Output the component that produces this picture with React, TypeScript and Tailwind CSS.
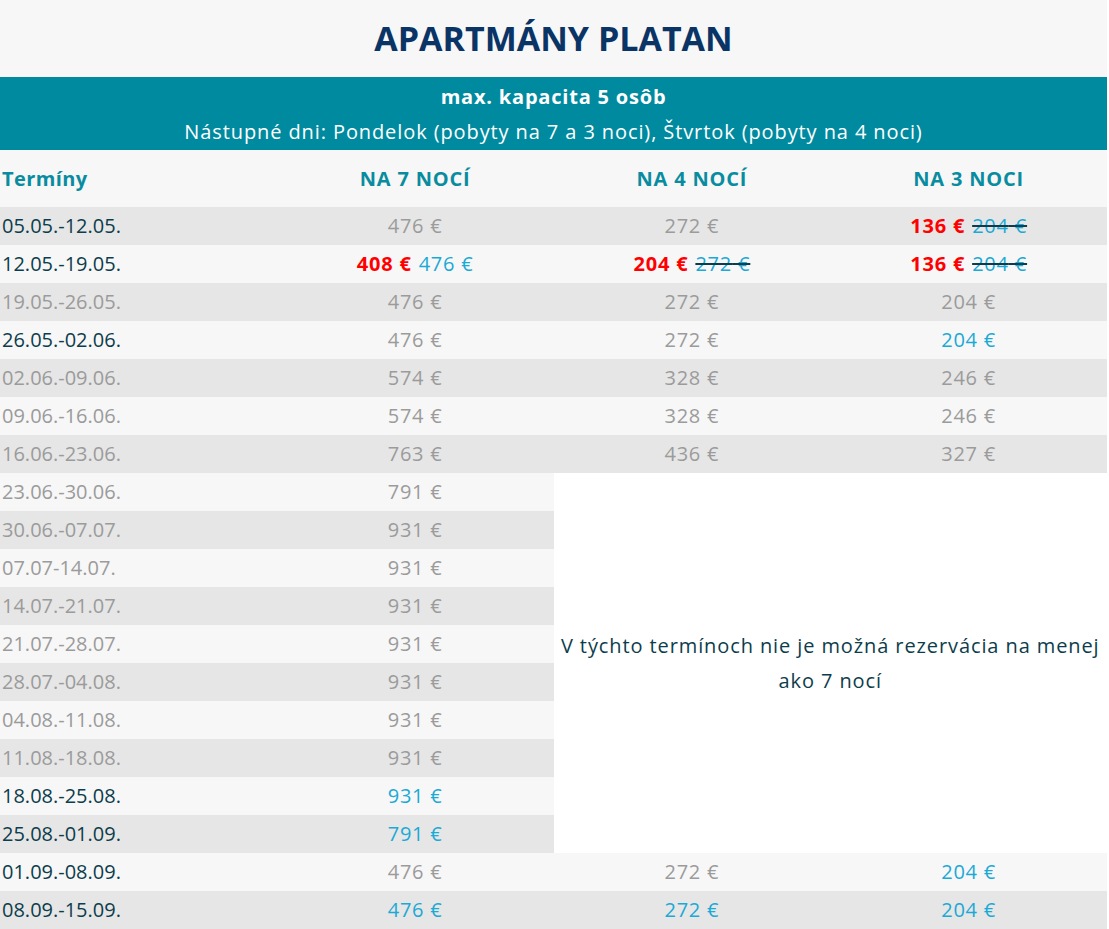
type Price = { v: string; tone: 'gray' | 'cyan' | 'red'; strike?: boolean };
type Cell = Price[];

interface Row {
  date: string;
  active: boolean;
  n7: Cell;
  n4?: Cell;
  n3?: Cell;
}

const g = (v: string): Cell => [{ v, tone: 'gray' }];
const c = (v: string): Cell => [{ v, tone: 'cyan' }];
const sale = (now: string, was: string, strike = true): Cell => [
  { v: now, tone: 'red' },
  { v: was, tone: 'cyan', strike },
];

const rows: Row[] = [
  { date: '05.05.-12.05.', active: true, n7: g('476'), n4: g('272'), n3: sale('136', '204') },
  { date: '12.05.-19.05.', active: true, n7: sale('408', '476', false), n4: sale('204', '272'), n3: sale('136', '204') },
  { date: '19.05.-26.05.', active: false, n7: g('476'), n4: g('272'), n3: g('204') },
  { date: '26.05.-02.06.', active: true, n7: g('476'), n4: g('272'), n3: c('204') },
  { date: '02.06.-09.06.', active: false, n7: g('574'), n4: g('328'), n3: g('246') },
  { date: '09.06.-16.06.', active: false, n7: g('574'), n4: g('328'), n3: g('246') },
  { date: '16.06.-23.06.', active: false, n7: g('763'), n4: g('436'), n3: g('327') },
  { date: '23.06.-30.06.', active: false, n7: g('791') },
  { date: '30.06.-07.07.', active: false, n7: g('931') },
  { date: '07.07-14.07.', active: false, n7: g('931') },
  { date: '14.07.-21.07.', active: false, n7: g('931') },
  { date: '21.07.-28.07.', active: false, n7: g('931') },
  { date: '28.07.-04.08.', active: false, n7: g('931') },
  { date: '04.08.-11.08.', active: false, n7: g('931') },
  { date: '11.08.-18.08.', active: false, n7: g('931') },
  { date: '18.08.-25.08.', active: true, n7: c('931') },
  { date: '25.08.-01.09.', active: true, n7: c('791') },
  { date: '01.09.-08.09.', active: true, n7: g('476'), n4: g('272'), n3: c('204') },
  { date: '08.09.-15.09.', active: true, n7: c('476'), n4: c('272'), n3: c('204') },
];

function PriceCell({ cell }: { cell: Cell }) {
  return (
    <>
      {cell.map((p, i) => (
        <span
          key={i}
          className={
            p.tone === 'red'
              ? 'font-bold text-[#ff0000] mr-[7px]'
              : p.tone === 'cyan'
                ? `text-[#1ba9d5] ${p.strike ? 'line-through decoration-[#0d3d4c]' : ''}`
                : 'text-[#9b9b9b]'
          }
        >
          {p.v} €
        </span>
      ))}
    </>
  );
}

export default function App() {
  return (
    <div className="min-h-screen bg-white" style={{ fontFamily: '"Open Sans", "Noto Sans", sans-serif' }}>
      <div className="w-[1107px] bg-[#f7f7f7]">
        <h1 className="h-[77px] flex items-center justify-center text-[34px] font-bold text-[#0b3466]">
          APARTMÁNY PLATAN
        </h1>
        <div className="h-[73px] bg-[#008a9f] text-white flex flex-col items-center justify-center text-[20px] leading-[35px] tracking-[0.9px]">
          <p className="font-bold tracking-[0.8px]">max. kapacita 5 osôb</p>
          <p>Nástupné dni: Pondelok (pobyty na 7 a 3 noci), Štvrtok (pobyty na 4 noci)</p>
        </div>
        <table className="w-full table-fixed border-collapse text-[20px] text-[#0d3d4c]">
          <thead>
            <tr className="h-[57px] text-[#0a8ca0] font-bold">
              <th className="text-left pl-[2px] tracking-[0.4px]">Termíny</th>
              <th className="tracking-[0.8px]">NA 7 NOCÍ</th>
              <th className="tracking-[0.8px]">NA 4 NOCÍ</th>
              <th className="tracking-[0.8px]">NA 3 NOCI</th>
            </tr>
          </thead>
          <tbody>
            {rows.map((r, i) => (
              <tr key={r.date} className={`h-[38px] ${i % 2 === 0 ? 'bg-[#e6e6e6]' : 'bg-[#f7f7f7]'}`}>
                <td className={`pl-[2px] ${r.active ? 'text-[#0d3d4c]' : 'text-[#9b9b9b]'}`}>{r.date}</td>
                <td className="text-center tracking-[0.8px]">
                  <PriceCell cell={r.n7} />
                </td>
                {r.n4 && r.n3 ? (
                  <>
                    <td className="text-center tracking-[0.8px]">
                      <PriceCell cell={r.n4} />
                    </td>
                    <td className="text-center tracking-[0.8px]">
                      <PriceCell cell={r.n3} />
                    </td>
                  </>
                ) : r.date === '23.06.-30.06.' ? (
                  <td
                    colSpan={2}
                    rowSpan={10}
                    className="bg-white text-center leading-[35px] tracking-[0.9px] text-[#0d3d4c]"
                  >
                    V týchto termínoch nie je možná rezervácia na menej
                    <br />
                    ako 7 nocí
                  </td>
                ) : null}
              </tr>
            ))}
          </tbody>
        </table>
      </div>
    </div>
  );
}
